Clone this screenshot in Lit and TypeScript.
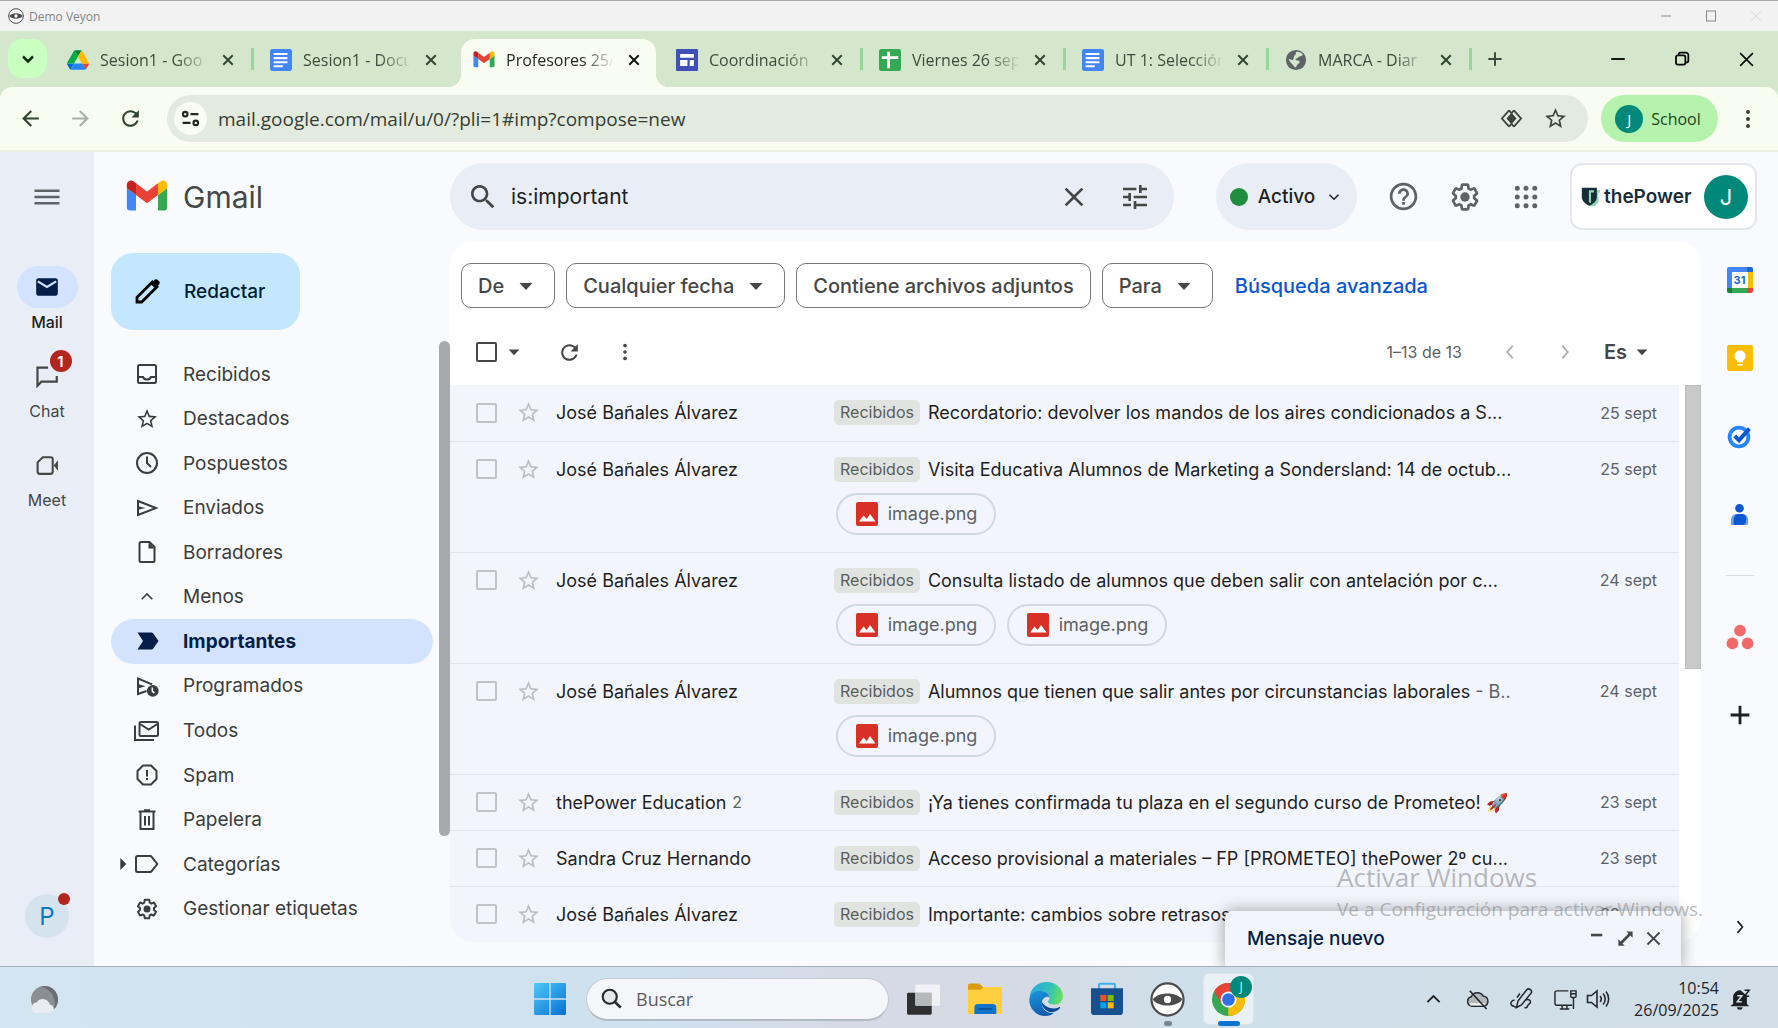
import { LitElement, html, css, svg, nothing } from "lit";
import { customElement, property } from "lit/decorators.js";
import { classMap } from "lit/directives/class-map.js";

const P = {
  menu: svg`<path d="M2 18h20v-2H2v2zm0-5h20v-2H2v2zm0-7v2h20V6H2z"/>`,
  search: svg`<path d="M15.5 14h-.79l-.28-.27C15.41 12.59 16 11.11 16 9.5 16 5.91 13.09 3 9.5 3S3 5.91 3 9.5 5.91 16 9.5 16c1.61 0 3.09-.59 4.23-1.57l.27.28v.79l5 4.99L20.49 19l-4.99-5zm-6 0C7.01 14 5 11.99 5 9.5S7.01 5 9.5 5 14 7.01 14 9.5 11.99 14 9.5 14z"/>`,
  close: svg`<path d="M19 6.41L17.59 5 12 10.59 6.41 5 5 6.41 10.59 12 5 17.59 6.41 19 12 13.41 17.59 19 19 17.59 13.41 12z"/>`,
  tune: svg`<path d="M3 17v2h6v-2H3zM3 5v2h10V5H3zm10 16v-2h8v-2h-8v-2h-2v6h2zM7 9v2H3v2h4v2h2V9H7zm14 4v-2H11v2h10zm-6-4h2V7h4V5h-4V3h-2v6z"/>`,
  help: svg`<path d="M11 18h2v-2h-2v2zm1-16C6.48 2 2 6.48 2 12s4.48 10 10 10 10-4.48 10-10S17.52 2 12 2zm0 18c-4.41 0-8-3.59-8-8s3.59-8 8-8 8 3.59 8 8-3.59 8-8 8zm0-14c-2.21 0-4 1.79-4 4h2c0-1.1.9-2 2-2s2 .9 2 2c0 2-3 1.75-3 5h2c0-2.25 3-2.5 3-5 0-2.21-1.79-4-4-4z"/>`,
  gear: svg`<path d="M13.85 22.25h-3.7c-.74 0-1.36-.54-1.45-1.27l-.27-1.89c-.27-.14-.53-.29-.79-.46l-1.8.72c-.7.26-1.47-.03-1.81-.65L2.2 15.53c-.35-.66-.2-1.44.36-1.88l1.53-1.19c-.01-.15-.02-.3-.02-.46 0-.15.01-.31.02-.46l-1.52-1.19c-.59-.45-.74-1.26-.37-1.88l1.85-3.19c.34-.62 1.11-.9 1.79-.63l1.81.73c.26-.17.52-.32.78-.46l.27-1.91c.09-.7.71-1.25 1.44-1.25h3.7c.74 0 1.36.54 1.45 1.27l.27 1.89c.27.14.53.29.79.46l1.8-.72c.71-.26 1.48.03 1.82.65l1.84 3.18c.36.66.2 1.44-.36 1.88l-1.52 1.19c.01.15.02.3.02.46s-.01.31-.02.46l1.52 1.19c.56.45.72 1.23.37 1.86l-1.86 3.22c-.34.62-1.11.9-1.8.63l-1.8-.72c-.26.17-.52.32-.78.46l-.27 1.91c-.1.68-.72 1.22-1.46 1.22zm-3.23-2h2.76l.37-2.55.53-.22c.44-.18.88-.44 1.34-.78l.45-.34 2.38.96 1.38-2.4-2.03-1.58.07-.56c.03-.26.06-.51.06-.78s-.03-.53-.06-.78l-.07-.56 2.03-1.58-1.39-2.4-2.39.96-.45-.35c-.42-.32-.87-.58-1.33-.77l-.52-.22-.37-2.55h-2.76l-.37 2.55-.53.21c-.44.19-.88.44-1.34.79l-.45.33-2.38-.95-1.39 2.39 2.03 1.58-.07.56a7 7 0 0 0-.06.79c0 .26.02.53.06.78l.07.56-2.03 1.58 1.38 2.4 2.39-.96.45.35c.43.33.86.58 1.33.77l.53.22.38 2.55z"/><circle cx="12" cy="12" r="3.5"/>`,
  apps: svg`${[5, 12, 19].map((y) => [5, 12, 19].map((x) => svg`<circle cx=${x} cy=${y} r="2"/>`))}`,
  star: svg`<path d="M22 9.24l-7.19-.62L12 2 9.19 8.63 2 9.24l5.46 4.73L5.82 21 12 17.27 18.18 21l-1.63-7.03L22 9.24zM12 15.4l-3.76 2.27 1-4.28-3.32-2.88 4.38-.38L12 6.1l1.71 4.04 4.38.38-3.32 2.88 1 4.28L12 15.4z"/>`,
  refresh: svg`<path d="M17.65 6.35C16.2 4.9 14.21 4 12 4c-4.42 0-7.99 3.58-7.99 8s3.57 8 7.99 8c3.73 0 6.84-2.55 7.73-6h-2.08c-.82 2.33-3.04 4-5.65 4-3.31 0-6-2.69-6-6s2.69-6 6-6c1.66 0 3.14.69 4.22 1.78L13 11h7V4l-2.35 2.35z"/>`,
  back: svg`<path d="M20 11H7.83l5.59-5.59L12 4l-8 8 8 8 1.41-1.41L7.83 13H20v-2z"/>`,
  forward: svg`<path d="M12 4l-1.41 1.41L16.17 11H4v2h12.17l-5.58 5.59L12 20l8-8z"/>`,
  dots: svg`<circle cx="12" cy="5" r="2"/><circle cx="12" cy="12" r="2"/><circle cx="12" cy="19" r="2"/>`,
  caret: svg`<path d="M5.500 9h13l-6.500 7z"/>`,
  chevDown: svg`<path d="M6 9l6 6 6-6" fill="none" stroke="currentColor" stroke-width="2"/>`,
  chevDownBold: svg`<path d="M6 9l6 6 6-6" fill="none" stroke="currentColor" stroke-width="3"/>`,
  chevUp: svg`<path d="M5 15l7-7 7 7" fill="none" stroke="currentColor" stroke-width="2.2"/>`,
  chevLeft: svg`<path d="M15 5l-6 7 6 7" fill="none" stroke="currentColor" stroke-width="2"/>`,
  chevRight: svg`<path d="M9 5l6 7-6 7" fill="none" stroke="currentColor" stroke-width="2"/>`,
  plus: svg`<path d="M12 4v16M4 12h16" fill="none" stroke="currentColor" stroke-width="2.4"/>`,
  site: svg`<g fill="none" stroke="currentColor" stroke-width="2.4"><circle cx="6" cy="7" r="2.6"/><path d="M12 7h9M3 17h9"/><circle cx="18" cy="17" r="2.6"/></g>`,
  diamonds: svg`<g fill="none" stroke="currentColor" stroke-width="1.9"><path d="M9.5 3.500L2 12l7.500 8.500M14.500 3.500L22 12l-7.500 8.500M9.500 3.500l2.500 3M14.500 3.500L12 6.500M9.500 20.500l2.500-3M14.500 20.500L12 17.500"/><path d="M12 7.500L8 12l4 4.500 4-4.500z" fill="currentColor"/></g>`,
  mail: svg`<path d="M20 4H4c-1.100 0-2 .9-2 2v12c0 1.100.9 2 2 2h16c1.100 0 2-.9 2-2V6c0-1.100-.9-2-2-2z"/><path d="M3.500 6.800L12 12l8.500-5.200" fill="none" stroke="#d3e3fd" stroke-width="2"/>`,
  chat: svg`<path d="M13 4.200H3.200V21l3.600-3.800H21V12" fill="none" stroke="currentColor" stroke-width="2"/>`,
  meet: svg`<path d="M7.500 4H15a2 2 0 0 1 2 2v12a2 2 0 0 1-2 2H4.500a2 2 0 0 1-2-2V9z" fill="none" stroke="currentColor" stroke-width="2"/><path d="M18 12l4-5v10z"/>`,
  pencil: svg`<path d="M3.300 20.700v-3.900L16 4.100l3.900 3.900L7.200 20.700z" fill="none" stroke="currentColor" stroke-width="2.300"/><path d="M14.500 5.600L17.300 2.800a2.400 2.400 0 0 1 3.500 0l.4.4a2.400 2.400 0 0 1 0 3.500l-2.800 2.800z"/>`,
  inbox: svg`<path d="M3 4.500a1.500 1.500 0 0 1 1.500-1.500h15a1.500 1.500 0 0 1 1.500 1.500v15a1.500 1.500 0 0 1-1.500 1.500h-15a1.500 1.500 0 0 1-1.500-1.500z" fill="none" stroke="currentColor" stroke-width="2"/><path d="M3 15h5c.8 1.700 2.200 2.600 4 2.600s3.200-.9 4-2.600h5" fill="none" stroke="currentColor" stroke-width="2"/>`,
  clock: svg`<circle cx="12" cy="12" r="10" fill="none" stroke="currentColor" stroke-width="2"/><path d="M12 5.500V12l4 4" fill="none" stroke="currentColor" stroke-width="2"/>`,
  send: svg`<path d="M3 5l18 7-18 7z" fill="none" stroke="currentColor" stroke-width="2"/><path d="M3 10.200l7.500 1.800-7.500 1.800z"/>`,
  file: svg`<path d="M14.500 2H6a1.500 1.500 0 0 0-1.500 1.500v17A1.500 1.500 0 0 0 6 22h12a1.500 1.500 0 0 0 1.500-1.500V7z" fill="none" stroke="currentColor" stroke-width="2"/><path d="M13.500 2V8.500h6z"/>`,
  important: svg`<path d="M2.500 3.500h14a2 2 0 0 1 1.600.8L23.500 12l-5.400 7.700a2 2 0 0 1-1.600.8h-14L8 12z"/>`,
  scheduled: svg`<path d="M11.500 17L3 20V4.500L17 10.300" fill="none" stroke="currentColor" stroke-width="2"/><path d="M3 10l7.500 2.200L3 14.400z"/><circle cx="17.800" cy="16.800" r="5.900"/><path d="M17.300 13.500v3.600l2 2" fill="none" stroke="#f8fafd" stroke-width="1.500"/>`,
  all: svg`<g fill="none" stroke="currentColor" stroke-width="2"><rect x="4.500" y="3" width="18.500" height="14" rx="1.500"/><path d="M5 5l8.700 5.500L22.500 5"/><path d="M0 6.500V21h19"/></g>`,
  spam: svg`<path d="M8 2.500h8L21.500 8v8L16 21.500H8L2.500 16V8z" fill="none" stroke="currentColor" stroke-width="2"/><path d="M11 7h2v6.500h-2zM11 15h2v2h-2z"/>`,
  trash: svg`<path d="M5.500 4.500v16.500h13V4.500M3.500 3.500h17M9 2.200h6M10 8v9.500M14 8v9.500" fill="none" stroke="currentColor" stroke-width="2"/>`,
  label: svg`<path d="M2.500 4h12.500a2 2 0 0 1 1.700.9L22.300 12l-5.600 7.100a2 2 0 0 1-1.700.9H2.500A1.500 1.500 0 0 1 1 18.500v-13A1.500 1.500 0 0 1 2.500 4z" fill="none" stroke="currentColor" stroke-width="2"/>`,
  picture: svg`<rect x="1" y="0" width="22" height="24" rx="2" fill="#d93025"/><path d="M4 19.500l4.500-6 3.200 3.500 3.300-5 5.500 7.500z" fill="#fff"/>`,
  expand: svg`<path d="M13 3h8v8l-2.800-2.800L8.200 18.200 11 21H3v-8l2.800 2.800L15.800 5.800z"/>`,
  minus: svg`<path d="M4 5h15v3.500H4z"/>`,
  winMin: svg`<path d="M3 12h18" stroke="currentColor" stroke-width="2.400" fill="none"/>`,
  winRestore: svg`<g fill="none" stroke="currentColor" stroke-width="2.600"><rect x="3" y="6.500" width="14" height="14" rx="2.500"/><path d="M7 6V5a2.500 2.500 0 0 1 2.500-2.500H18a3.500 3.500 0 0 1 3.500 3.500v8.500a2.500 2.500 0 0 1-2.500 2.500h-1"/></g>`,
  winClose: svg`<path d="M3 3l18 18M21 3L3 21" stroke="currentColor" stroke-width="2.200" fill="none"/>`,
  tabClose: svg`<path d="M2.500 2.500l19 19M21.500 2.500l-19 19" stroke="currentColor" stroke-width="3.800" fill="none"/>`,
  thinMin: svg`<path d="M2 12h20" stroke="currentColor" stroke-width="2" fill="none"/>`,
  thinMax: svg`<rect x="3" y="2" width="18" height="20" stroke="currentColor" stroke-width="2" fill="none"/>`,
  thinClose: svg`<path d="M2 2l20 20M22 2L2 22" stroke="currentColor" stroke-width="1.600" fill="none"/>`,
  arrowRight: svg`<path d="M8 3l9 9-9 9z"/>`,
  gmail: svg`<g transform="translate(-13.100 -8.450) scale(.2614)"><path fill="#4285f4" d="M58 108h14V74L52 59v43c0 3.320 2.690 6 6 6"/><path fill="#34a853" d="M120 108h14c3.320 0 6-2.690 6-6V59l-20 15"/><path fill="#fbbc04" d="M120 48v26l20-15v-8c0-7.420-8.470-11.650-14.400-7.200"/><path fill="#ea4335" d="M72 74V48l24 18 24-18v26L96 92"/><path fill="#c5221f" d="M52 51v8l20 15V48l-5.600-4.200c-5.940-4.450-14.400-.22-14.400 7.200"/></g>`,
  drive: svg`<g transform="translate(0 1.300) scale(.275)"><path fill="#0066da" d="m6.600 66.850 3.850 6.650c.8 1.400 1.950 2.500 3.300 3.300l13.750-23.800h-27.500c0 1.550.4 3.100 1.200 4.500z"/><path fill="#00ac47" d="m43.650 25-13.750-23.800c-1.350.8-2.500 1.900-3.300 3.300l-25.400 44a9.060 9.060 0 0 0 -1.200 4.500h27.500z"/><path fill="#ea4335" d="m73.550 76.800c1.350-.8 2.500-1.900 3.300-3.300l1.600-2.750 7.650-13.250c.8-1.400 1.200-2.950 1.200-4.500h-27.502l5.852 11.500z"/><path fill="#00832d" d="m43.650 25 13.750-23.800c-1.350-.8-2.900-1.200-4.500-1.200h-18.500c-1.600 0-3.150.45-4.500 1.200z"/><path fill="#2684fc" d="m59.800 53h-32.300l-13.750 23.800c1.350.8 2.900 1.200 4.500 1.200h50.800c1.600 0 3.150-.45 4.500-1.200z"/><path fill="#ffba00" d="m73.400 26.500-12.700-22c-.8-1.400-1.950-2.500-3.300-3.300l-13.750 23.800 16.150 28h27.450c0-1.550-.4-3.100-1.200-4.500z"/></g>`,
  docs: svg`<rect width="24" height="24" rx="2.500" fill="#4285f4"/><path d="M4 5.500h15M4 10h15M4 14.500h15M4 18.800h10" stroke="#fff" stroke-width="2.300"/>`,
  sites: svg`<rect width="24" height="24" rx="1" fill="#3f51b5"/><path d="M4.500 5.500h15v4h-15zM4.500 12h8v6.500h-8zM15 12h4.500v6.500H15z" fill="#fff"/>`,
  sheets: svg`<rect width="24" height="24" rx="2.500" fill="#34a853"/><path d="M3 9.500h18M10.500 3v18" stroke="#fff" stroke-width="3"/>`,
  globe: svg`<circle cx="12" cy="12" r="11" fill="#5f6368"/><path d="M13 3c3 0 5 1 6.500 3-1.500 2.500-4 1.500-5 3-1 1.700-3 1-3 2.500s4 .5 4.500 2.500c.4 1.800-3 2.500-3.500 5-.3 1.500-2 1-3-.5C8.500 16.500 5 15 4 11c2 0 4 2 5 .5S9 8 11 6.500 10.500 3.500 13 3z" fill="#d4e6cc"/>`,
  eye: svg`<circle cx="12" cy="12" r="11" fill="#fff" stroke="#4b4b4d" stroke-width="1.500"/><path d="M1.800 12C6 6.500 18 6.500 22.200 12 18 17.500 6 17.500 1.800 12z" fill="#4b4b4d"/><circle cx="12" cy="12" r="2.500" fill="#fff"/>`,
  keep: svg`<rect width="24" height="24" rx="2" fill="#fbbc04"/><path d="M12 5a5 5 0 0 0-2.800 9.200V16h5.600v-1.800A5 5 0 0 0 12 5zM9.500 17.500h5V19h-5z" fill="#fff"/>`,
  tasks: svg`<circle cx="11.500" cy="12.500" r="9" fill="none" stroke="#2684fc" stroke-width="3.600"/><path d="M7.500 11.500l4 4.200L21.500 4.500" fill="none" stroke="#0b57d0" stroke-width="3.800"/>`,
  contacts: svg`<circle cx="12" cy="5.500" r="4.500" fill="#0b57d0"/><path d="M3 23v-4.500C3 14 5.500 11.500 9 11.500h6c3.500 0 6 2.500 6 6V21a2 2 0 0 1-2 2z" fill="#669df6"/><path d="M6 23v-5c0-4 1.800-6.500 5-6.500h3.500c3 0 4.500 2.500 4.500 6 0 3-1.500 5.500-4 5.500z" fill="#0b57d0"/>`,
  asana: svg`<g fill="#f06a6a"><circle cx="12" cy="6.500" r="5"/><circle cx="5.500" cy="17.500" r="5"/><circle cx="18.500" cy="17.500" r="5"/></g>`,
  shield: svg`<path d="M11 4h12v2.500h-2V18l-4.500 5H11z" fill="#8fd8b0"/><path d="M1 1h18v11c0 4.500-3.500 8-9 10.500C4.500 20 1 16.500 1 12z" fill="#172d3a"/><path d="M9.500 4h6v2.500h-3.500v13l-2.500-1.500z" fill="#8fd8b0"/>`,
  windows: svg`<defs><linearGradient id="w" x1="0" y1="0" x2="1" y2="1" gradientUnits="objectBoundingBox"><stop offset="0" stop-color="#4cc9fa"/><stop offset="1" stop-color="#0a6fd0"/></linearGradient></defs><path fill="url(#w)" d="M1 0h10.500v11.500H0V1a1 1 0 0 1 1-1zM12.500 0H23a1 1 0 0 1 1 1v10.500H12.500zM0 12.500h11.500V24H1a1 1 0 0 1-1-1zM12.500 12.500H24V23a1 1 0 0 1-1 1H12.500z"/>`,
  taskview: svg`<rect x="0" y="7" width="18" height="16" rx="1" fill="#2f2f30"/><rect x="6" y="1" width="18" height="15.500" rx="1" fill="#f6f6f8" fill-opacity=".82"/><rect x="6" y="7" width="12" height="9.500" fill="#b7b8ba"/>`,
  folder: svg`<path d="M0 2.500A1.500 1.500 0 0 1 1.500 1H8l2.500 2.500H22A1.500 1.500 0 0 1 23.500 5v4H0z" fill="#d99c0f"/><path d="M0 5.500h9L11 3.500h11A1.500 1.500 0 0 1 24 5v17.500H0z" fill="#fdcf3f"/><path d="M4.500 22.500V18A2.500 2.500 0 0 1 7 15.500h10.500A2.500 2.500 0 0 1 20 18v4.500z" fill="#1273cf"/><path d="M7.500 19h9.500" stroke="#0a4f96" stroke-width="1.200"/>`,
  edge: svg`<defs><linearGradient id="e1" x1="0" y1=".3" x2="1" y2=".5"><stop offset="0" stop-color="#2aa8dc"/><stop offset=".6" stop-color="#33c5b5"/><stop offset="1" stop-color="#6be05a"/></linearGradient><linearGradient id="e2" x1="0" y1="0" x2=".4" y2="1"><stop offset="0" stop-color="#1d9ade"/><stop offset="1" stop-color="#0b5bb0"/></linearGradient></defs><path d="M.5 10.500C1 4.500 6 0 12.200 0 19 0 24 4.500 24 10c0 3.800-2.800 6-6.200 6-2.500 0-4.300-.8-4.300-2 0-.8 1-1.200 1-3 0-2.500-2.300-4.500-5.500-4.500-4 0-7 1.500-8.500 4z" fill="url(#e1)"/><path d="M.2 12.500C.4 8.500 4 6 8 6.200c4 .2 6.500 2.300 6.500 5-1-1.800-5.500-.5-5.500 3.800 0 4.500 4.500 8 9 6.500-2 1.700-4 2.500-6.500 2.500C5 24 .1 18.500.2 12.500z" fill="url(#e2)"/><path d="M9 14c-.3 4.500 4 8 8 7.200 2-.4 3.500-1.200 4.800-2.700.5-.6 0-1.100-.6-.7-4 2-9.200.8-12.200-3.800z" fill="#0c4a94"/>`,
  store: svg`<path d="M6 5V1.500a1 1 0 0 1 1-1h10a1 1 0 0 1 1 1V5" fill="none" stroke="#35b3ee" stroke-width="1.500"/><path d="M0 4h24v17.500a2.500 2.500 0 0 1-2.500 2.500h-19A2.500 2.500 0 0 1 0 21.500z" fill="#17508f"/><path d="M7 9h4.500v4.500H7z" fill="#f25022"/><path d="M12.500 9H17v4.500h-4.500z" fill="#7fba00"/><path d="M7 14.500h4.500V19H7z" fill="#00a4ef"/><path d="M12.500 14.500H17V19h-4.500z" fill="#ffb900"/>`,
  chrome: svg`<circle cx="12" cy="12" r="12" fill="#34a853"/><path d="M12 12L1.600 6A12 12 0 0 1 22.400 6z" fill="#ea4335"/><path d="M12 12l10.400-6A12 12 0 0 1 12 24z" fill="#fbbc04"/><path d="M1.600 6l5.200 9L12 6.500z" fill="#ea4335"/><path d="M12 24l5.200-9L12 12z" fill="#fbbc04"/><circle cx="12" cy="12" r="5.800" fill="#fff"/><circle cx="12" cy="12" r="4.600" fill="#2f6fe8"/>`,
  weather: svg`<circle cx="12" cy="12" r="10.500" fill="#8b8f94"/><path d="M12 1.500a10.500 10.500 0 0 1 7 18.300C22 13 18 4 9 2z" fill="#6a6e73"/><path d="M6.500 22.500a4.200 4.200 0 0 1-.4-8.400 5.600 5.600 0 0 1 10 1.700 3.400 3.400 0 0 1 .4 6.700z" fill="#e9edf1"/>`,
  cloudOff: svg`<path d="M6 19a5 5 0 0 1-.5-9.800A7 7 0 0 1 18 8.500a5.300 5.300 0 0 1 .5 10.500z" fill="#b4b8bb" stroke="#24292c" stroke-width="1.500"/><path d="M4.500 17h15" stroke="#eceff1" stroke-width="2.500"/><path d="M4 3l17.500 19" stroke="#24292c" stroke-width="1.600"/>`,
  pen: svg`<g fill="none" stroke="#24292c" stroke-width="1.500"><path d="M9 14L17.500 3a2.800 2.800 0 0 1 4.300 3.600L12.500 18 7.500 20.500z"/><path d="M5.500 13c-3 .5-4.500 3-3 5 1.200 1.600 3.500 1 4.500 2.500M16 13c3-1 5.500-.5 5.500 2 0 2-2.500 2-3 4s-1.500 2-3 1.500M11 6.500l-3 4"/></g>`,
  monitor: svg`<g fill="none" stroke="#24292c" stroke-width="1.500"><path d="M15 3H3a2 2 0 0 0-2 2v11a2 2 0 0 0 2 2h16M6 22h10M8.500 18v4M13.500 18v4"/><path d="M17.500 3H23v5.500a1.500 1.500 0 0 1-1.500 1.500H19a1.500 1.500 0 0 1-1.500-1.500zM20.300 10v12M17.500 6H23"/></g>`,
  speaker: svg`<g fill="none" stroke="#24292c" stroke-width="1.600"><path d="M1.500 8.500h4L11 4v16l-5.500-4.500h-4z"/><path d="M14 9a4.500 4.500 0 0 1 0 6M17 6.500a8 8 0 0 1 0 11M20 4.500a12 12 0 0 1 0 15"/></g>`,
  bell: svg`<path d="M4.500 17.500V10a7.500 7.500 0 0 1 8-7.500l7 6v9l2 1.500v1H2v-1zM8.500 21h6.500a3.300 3.300 0 0 1-6.500 0z" fill="#1b1f22"/><path d="M9 8.500h5L9 15h5" fill="none" stroke="#d0dee7" stroke-width="1.600"/><path d="M17 2.500h5L17 9h5" fill="none" stroke="#1b1f22" stroke-width="1.600"/>`,
  magnifier: svg`<circle cx="10" cy="10" r="8" fill="#e6e7ea" stroke="#26282b" stroke-width="2.400"/><path d="M16 16l6.500 6.500" stroke="#26282b" stroke-width="3"/>`,
};
type IconName = keyof typeof P;

@customElement("ui-icon")
class UiIcon extends LitElement {
  @property() name: IconName = "menu";
  @property({ type: Number }) size = 24;
  static styles = css`
    :host { display: inline-flex; flex: none; }
    svg { display: block; fill: currentColor; overflow: visible; }
  `;
  render() {
    return html`<svg width=${this.size} height=${this.size} viewBox="0 0 24 24" aria-hidden="true">${P[this.name]}</svg>`;
  }
}

const icon = (name: IconName, size = 24) => html`<ui-icon name=${name} size=${size}></ui-icon>`;

const TABS: { icon: IconName; title: string; active?: boolean; sep?: boolean }[] = [
  { icon: "drive", title: "Sesion1 - Goo", sep: true },
  { icon: "docs", title: "Sesion1 - Docu" },
  { icon: "gmail", title: "Profesores 25/", active: true },
  { icon: "sites", title: "Coordinación", sep: true },
  { icon: "sheets", title: "Viernes 26 sep", sep: true },
  { icon: "docs", title: "UT 1: Selección", sep: true },
  { icon: "globe", title: "MARCA - Diar", sep: true },
];

const FOLDERS: { icon: IconName; name: string; active?: boolean; nested?: boolean; size?: number }[] = [
  { icon: "inbox", name: "Recibidos" },
  { icon: "star", name: "Destacados" },
  { icon: "clock", name: "Pospuestos" },
  { icon: "send", name: "Enviados" },
  { icon: "file", name: "Borradores" },
  { icon: "chevUp", name: "Menos", size: 18 },
  { icon: "important", name: "Importantes", active: true },
  { icon: "scheduled", name: "Programados" },
  { icon: "all", name: "Todos" },
  { icon: "spam", name: "Spam" },
  { icon: "trash", name: "Papelera" },
  { icon: "label", name: "Categorías", nested: true },
  { icon: "gear", name: "Gestionar etiquetas" },
];

const MAILS: { from: string; count?: number; subject: string; snippet?: string; files?: number; date: string }[] = [
  { from: "José Bañales Álvarez", subject: "Recordatorio: devolver los mandos de los aires condicionados a S...", date: "25 sept" },
  { from: "José Bañales Álvarez", subject: "Visita Educativa Alumnos de Marketing a Sondersland: 14 de octub...", files: 1, date: "25 sept" },
  { from: "José Bañales Álvarez", subject: "Consulta listado de alumnos que deben salir con antelación por c...", files: 2, date: "24 sept" },
  { from: "José Bañales Álvarez", subject: "Alumnos que tienen que salir antes por circunstancias laborales", snippet: " - B..", files: 1, date: "24 sept" },
  { from: "thePower Education", count: 2, subject: "¡Ya tienes confirmada tu plaza en el segundo curso de Prometeo! 🚀", date: "23 sept" },
  { from: "Sandra Cruz Hernando", subject: "Acceso provisional a materiales – FP [PROMETEO] thePower 2º cu...", date: "23 sept" },
  { from: "José Bañales Álvarez", subject: "Importante: cambios sobre retrasos", date: "22 sept" },
];

const reset = css`
  *, *::before, *::after { box-sizing: border-box; }
  button { font: inherit; color: inherit; background: none; border: 0; padding: 0; margin: 0; display: inline-flex; align-items: center; justify-content: center; flex: none; }
  a { color: inherit; text-decoration: none; }
  input { font: inherit; color: inherit; margin: 0; }
`;

@customElement("browser-chrome")
class BrowserChrome extends LitElement {
  static styles = [reset, css`
    :host { display: block; font-family: "Open Sans", "Noto Sans", sans-serif; background: #d4e6cc; }
    .title { display: flex; align-items: center; height: 31px; padding: 0 0 0 8px; background: #f2f2f2; border-top: 1px solid #adadad; font-size: 12px; color: #858585; gap: 5px; }
    .title .grow { flex: 1; }
    .title .ctl { display: flex; }
    .title button { width: 45px; height: 28px; }
    .title button:last-child { color: #d2d2d2; }
    .strip { display: flex; align-items: center; height: 56px; padding: 8px 0 0 8px; color: #3c4b3c; }
    .drop { width: 39px; height: 39px; border-radius: 14px; background: #c9ffc0; margin: 0 4px 9px 0; color: #0c2a0c; }
    .tab { position: relative; isolation: isolate; display: flex; align-items: center; flex: 0 1 203px; min-width: 0; height: 48px; padding: 0 14px 7px 16px; gap: 10px; font-size: 16px; }
    .tab .name { flex: 1; min-width: 0; justify-content: flex-start; overflow: hidden; white-space: nowrap; padding-left: 1px; mask-image: linear-gradient(90deg, #000 72%, rgba(0, 0, 0, .1)); }
    .tab .shut { width: 24px; height: 24px; color: #2f442f; }
    .tab.sep { background: linear-gradient(#96d696, #96d696) 100% 9px / 3px 22px no-repeat; }
    .tab.active { color: #1e281e; }
    .tab.active .shut { color: #0c140c; }
    .tab.active::before { content: ""; position: absolute; z-index: -1; inset: 0 4px; border-radius: 14px 14px 0 0; background: #f8fcf1; }
    .tab.active::after { content: ""; position: absolute; z-index: -1; inset: auto -9px 0; height: 13px; background: radial-gradient(circle at 0 0, transparent 13px, #f8fcf1 13px) 0 0 / 13px 13px no-repeat, radial-gradient(circle at 100% 0, transparent 13px, #f8fcf1 13px) 100% 0 / 13px 13px no-repeat; }
    .add { width: 46px; height: 40px; margin-bottom: 8px; }
    .strip .grow { flex: 1; }
    .win { width: 64px; height: 40px; margin-bottom: 8px; color: #000; }
    .bar { display: flex; align-items: center; height: 65px; padding: 0 14px 0 5px; background: #f8fcf1; border-bottom: 2px solid #ebf0e3; border-radius: 12px 12px 0 0; color: #2f442f; }
    .nav { width: 50px; height: 40px; }
    .nav[disabled] { color: #a7b2a4; }
    .omni { display: flex; align-items: center; flex: 1; height: 47px; margin: 0 13px 0 12px; padding: 0 11px 0 7px; border-radius: 24px; background: #e3ebdf; }
    .site { width: 33px; height: 33px; border-radius: 50%; background: #f8fcf1; color: #1e281e; }
    .omni input { flex: 1; min-width: 0; border: 0; background: none; padding: 0 11px; font-size: 19px; color: #363d35; }
    .omni .act { width: 44px; height: 40px; color: #3b463a; }
    .profile { height: 47px; width: 117px; gap: 8px; padding-right: 3px; border-radius: 24px; background: #b4f2ae; font-size: 16px; color: #1e4420; }
    .disc { display: inline-flex; align-items: center; justify-content: center; width: 28px; height: 28px; border-radius: 50%; background: #00897b; color: #fff; font-size: 15px; }
    .more { width: 32px; margin-left: 14px; height: 40px; }
  `];
  render() {
    return html`
      <div class="title">
        ${icon("eye", 16)}<span>Demo Veyon</span><span class="grow"></span>
        <div class="ctl">
          <button aria-label="Minimizar">${icon("thinMin", 12)}</button>
          <button aria-label="Maximizar">${icon("thinMax", 12)}</button>
          <button aria-label="Cerrar">${icon("thinClose", 12)}</button>
        </div>
      </div>
      <div class="strip">
        <button class="drop" aria-label="Buscar pestañas">${icon("chevDownBold", 20)}</button>
        ${TABS.map((t) => html`
          <div class=${classMap({ tab: true, active: !!t.active, sep: !!t.sep })}>
            ${icon(t.icon, 22)}
            <button class="name">${t.title}</button>
            <button class="shut" aria-label="Cerrar pestaña">${icon("tabClose", 12)}</button>
          </div>`)}
        <button class="add" aria-label="Nueva pestaña">${icon("plus", 20)}</button>
        <span class="grow"></span>
        <button class="win" aria-label="Minimizar">${icon("winMin", 18)}</button>
        <button class="win" aria-label="Restaurar">${icon("winRestore", 16)}</button>
        <button class="win" aria-label="Cerrar">${icon("winClose", 17)}</button>
      </div>
      <div class="bar">
        <button class="nav" aria-label="Atrás">${icon("back", 25)}</button>
        <button class="nav" aria-label="Adelante" disabled>${icon("forward", 25)}</button>
        <button class="nav" aria-label="Volver a cargar">${icon("refresh", 25)}</button>
        <div class="omni">
          <button class="site" aria-label="Información del sitio">${icon("site", 21)}</button>
          <input aria-label="Dirección" value="mail.google.com/mail/u/0/?pli=1#imp?compose=new">
          <button class="act" aria-label="Lente">${icon("diamonds", 23)}</button>
          <button class="act" aria-label="Marcador">${icon("star", 25)}</button>
        </div>
        <button class="profile"><span class="disc">J</span>School</button>
        <button class="more" aria-label="Menú">${icon("dots", 24)}</button>
      </div>`;
  }
}

@customElement("mail-list")
class MailList extends LitElement {
  static styles = [reset, css`
    :host { display: flex; flex-direction: column; flex: 1; min-width: 0; min-height: 0; overflow: hidden; background: #fff; border-radius: 24px; }
    .filters { display: flex; align-items: center; flex: none; gap: 11px; padding: 22px 11px 0; font-size: 20px; font-weight: 500; color: #444746; }
    .chip { height: 45px; padding: 0 16px; gap: 10px; border: 1px solid #747775; border-radius: 10px; white-space: nowrap; }
    .adv { margin-left: 11px; color: #0b57d0; white-space: nowrap; }
    .tools { display: flex; align-items: center; flex: none; height: 50px; margin: 19px 0 8px; padding: 0 45px 0 26px; color: #444746; font-size: 16px; }
    .box { appearance: none; display: block; width: 21px; height: 20px; border: 2px solid #444746; border-radius: 2px; background: transparent; flex: none; }
    .tools .pick { width: 34px; height: 40px; }
    .tools .btn { width: 55px; height: 40px; }
    .tools .first { margin-left: 11px; }
    .tools .grow { flex: 1; }
    .range { color: #5e6164; margin-right: 20px; white-space: nowrap; }
    .tools .page { color: #a9acae; }
    .lang { gap: 5px; width: 56px; margin-left: 8px; font-weight: 600; font-size: 20px; }
    .scroll { display: flex; flex: 1; min-height: 0; overflow: hidden; align-items: flex-start; }
    table { flex: 1; min-width: 0; border-collapse: collapse; table-layout: fixed; width: 100%; background: #f2f5fc; font-size: 18px; color: #1f1f1f; }
    td { padding: 0; height: 56px; vertical-align: top; border-bottom: 1px solid #e0e5ec; white-space: nowrap; overflow: hidden; }
    .c-box { width: 62px; padding-left: 26px; }
    .c-star { width: 32px; text-align: center; }
    .c-from { width: 290px; padding-left: 12px; }
    .c-date { width: 151px; padding-right: 22px; text-align: right; }
    .line { display: flex; align-items: center; height: 55px; }
    .c-box .box { border-color: #c0c3c7; }
    .c-star .line { justify-content: center; color: #bbbec2; }
    .count { font-size: 16px; color: #5e6164; margin-left: 6px; }
    .c-date .line { justify-content: flex-end; font-size: 16px; color: #5e6164; }
    .tag { padding: 0 6px; margin-right: 8px; height: 25px; line-height: 25px; border-radius: 5px; background: #e1e3e1; color: #5a5d5c; font-size: 16px; }
    .snip { color: #5e6164; white-space: pre; }
    .files { display: flex; gap: 11px; padding: 0 0 17px 2px; margin-top: -4px; height: 59px; }
    .file { height: 42px; width: 160px; gap: 9px; border: 2px solid #d0d9e2; border-radius: 21px; color: #5e6164; font-size: 18px; }
    .track { width: 16px; margin-left: 6px; flex: none; align-self: stretch; }
    .thumb { height: 51%; background: #c9c9c9; border: 1px solid #bdbdbd; }
  `];
  render() {
    return html`
      <div class="filters">
        <button class="chip">De ${icon("caret", 24)}</button>
        <button class="chip">Cualquier fecha ${icon("caret", 24)}</button>
        <button class="chip">Contiene archivos adjuntos</button>
        <button class="chip">Para ${icon("caret", 24)}</button>
        <a class="adv" href="#avanzada">Búsqueda avanzada</a>
      </div>
      <div class="tools">
        <input class="box" type="checkbox" aria-label="Seleccionar todo">
        <button class="pick" aria-label="Seleccionar">${icon("caret", 20)}</button>
        <button class="btn first" aria-label="Actualizar">${icon("refresh", 25)}</button>
        <button class="btn" aria-label="Más">${icon("dots", 22)}</button>
        <span class="grow"></span>
        <span class="range">1–13 de 13</span>
        <button class="btn page" aria-label="Anterior">${icon("chevLeft", 22)}</button>
        <button class="btn page" aria-label="Siguiente">${icon("chevRight", 22)}</button>
        <button class="lang">Es ${icon("caret", 20)}</button>
      </div>
      <div class="scroll">
        <table>
          <tbody>
            ${MAILS.map((m) => html`
              <tr>
                <td class="c-box"><div class="line"><input class="box" type="checkbox" aria-label="Seleccionar mensaje"></div></td>
                <td class="c-star"><div class="line"><button aria-label="Destacar">${icon("star", 25)}</button></div></td>
                <td class="c-from"><div class="line">${m.from}${m.count ? html`<span class="count">${m.count}</span>` : nothing}</div></td>
                <td>
                  <div class="line"><span class="tag">Recibidos</span><span>${m.subject}</span>${m.snippet ? html`<span class="snip">${m.snippet}</span>` : nothing}</div>
                  ${m.files ? html`<div class="files">${Array.from({ length: m.files }, () => html`<button class="file">${icon("picture", 24)}image.png</button>`)}</div>` : nothing}
                </td>
                <td class="c-date"><div class="line">${m.date}</div></td>
              </tr>`)}
          </tbody>
        </table>
        <div class="track"><div class="thumb"></div></div>
      </div>`;
  }
}

@customElement("gmail-app")
class GmailApp extends LitElement {
  static styles = [reset, css`
    :host { position: relative; display: flex; min-height: 0; overflow: hidden; background: #f8fafd; font-family: Inter, Roboto, sans-serif; color: #444746; }
    .rail { display: flex; flex-direction: column; align-items: center; flex: none; width: 94px; background: #e9eef6; padding-bottom: 28px; font-size: 16px; }
    .burger { height: 89px; width: 60px; color: #5f6368; }
    .app { display: flex; flex-direction: column; align-items: center; position: relative; height: 89px; color: #444746; }
    .app.on { color: #1f1f1f; font-weight: 500; }
    .pill { display: flex; align-items: center; justify-content: center; width: 61px; height: 42px; border-radius: 21px; margin-bottom: 4px; }
    .app.on .pill { background: #d3e3fd; color: #041e49; }
    .apps { display: flex; flex-direction: column; gap: 0; padding-top: 25px; flex: 1; }
    .badge { position: absolute; left: 33px; top: -5px; width: 22px; height: 22px; border-radius: 50%; background: #b3261e; color: #fff; font-size: 15px; font-weight: 600; display: flex; align-items: center; justify-content: center; }
    .presence { position: relative; display: flex; align-items: center; justify-content: center; width: 44px; height: 44px; border-radius: 50%; background: #d5e3ee; color: #0b78c8; font-size: 24px; }
    .presence i { position: absolute; right: -1px; top: -1px; width: 12px; height: 12px; border-radius: 50%; background: #b3261e; }
    .page { display: flex; flex-direction: column; flex: 1; min-width: 0; }
    header { display: flex; align-items: center; flex: none; height: 89px; padding: 0 21px 0 0; }
    .logo { display: flex; align-items: center; gap: 15px; width: 356px; flex: none; padding-left: 32px; font-size: 30px; color: #444746; }
    .search { display: flex; align-items: center; flex: 0 1 724px; min-width: 0; height: 67px; padding: 0 9px 0 17px; border-radius: 34px; background: #e9eef6; }
    .search input { flex: 1; min-width: 0; border: 0; background: none; padding: 0 12px; font-size: 21px; color: #1f1f1f; }
    .search button { width: 61px; height: 50px; }
    .status { margin-left: auto; gap: 10px; width: 141px; height: 67px; border-radius: 34px; background: #e9eef6; font-size: 19px; font-weight: 500; color: #1f1f1f; }
    .status i { width: 18px; height: 18px; border-radius: 50%; background: #1e8e3e; }
    .hicons { display: flex; margin: 0 14px 0 16px; color: #5f6368; }
    .hicons button { width: 61px; height: 50px; }
    .account { width: 187px; height: 67px; gap: 3px; padding: 0 7px 0 9px; background: #fff; border: 2px solid #e4e7ee; border-radius: 12px; color: #172d3a; font-size: 19px; font-weight: 600; justify-content: flex-start; }
    .avatar { display: flex; align-items: center; justify-content: center; width: 44px; height: 44px; margin-left: auto; border-radius: 50%; background: #00897b; color: #fff; font-size: 22px; font-weight: 400; flex: none; }
    .body { display: flex; flex: 1; min-height: 0; padding-bottom: 24px; }
    .side { position: relative; display: flex; flex-direction: column; width: 356px; flex: none; padding: 12px 17px 11px 17px; font-size: 19px; }
    .compose { width: 189px; height: 77px; border-radius: 22px; background: #c2e7ff; color: #001d35; font-weight: 500; justify-content: flex-start; padding-left: 22px; gap: 22px; flex: none; margin-bottom: 22px; }
    .compose ui-icon { color: #000; }
    nav { display: flex; flex-direction: column; flex: 1; min-height: 0; }
    nav a { position: relative; display: flex; align-items: center; flex: 1; gap: 24px; padding-left: 24px; border-radius: 23px; color: #3a3d3c; }
    nav a.on { background: #d3e3fd; color: #041e49; font-weight: 700; }
    nav .slot { display: flex; align-items: center; justify-content: center; width: 24px; }
    nav .open { position: absolute; left: 4px; }
    .sbar { position: absolute; right: 0; top: 100px; width: 11px; height: 495px; border-radius: 6px; background: #a8a9ac; }
    .addons { display: flex; flex-direction: column; align-items: center; flex: none; width: 77px; color: #1f1f1f; }
    .addons button { width: 50px; height: 78px; }
    .addons hr { width: 28px; height: 1px; border: 0; background: #d8dbe0; margin: 22px 0; flex: none; }
    .addons .fold { margin-top: auto; margin-bottom: -24px; }
    .cal { position: relative; width: 26px; height: 26px; display: flex; align-items: center; justify-content: center; background: linear-gradient(90deg, #4285f4 20px, #1967d2 20px) 0 0 / 100% 5px no-repeat, linear-gradient(#fff, #fff) 5px 5px / 16px 16px no-repeat, linear-gradient(90deg, #188038 5px, #34a853 5px, #34a853 20px, #ea4335 20px) 0 100% / 100% 5px no-repeat, linear-gradient(90deg, #4285f4 20px, #fbbc04 20px); border-radius: 2px; color: #1967d2; font-size: 11px; font-weight: 700; }
    .draft { position: absolute; right: 97px; bottom: 0; display: flex; align-items: center; width: 456px; height: 55px; padding: 0 14px 0 22px; background: #f2f6fc; border-radius: 8px 8px 0 0; box-shadow: 0 0 14px 2px rgba(60, 64, 67, .38); color: #041e49; font-size: 19px; font-weight: 500; }
    .draft span { flex: 1; }
    .draft button { width: 28px; height: 30px; color: #444746; }
    .activate { position: absolute; right: 68px; bottom: 43px; width: 373px; font-family: "Open Sans", sans-serif; color: rgba(128, 130, 134, .55); pointer-events: none; white-space: nowrap; }
    .activate b { display: block; font-weight: 400; font-size: 26px; line-height: 36px; }
    .activate span { display: block; font-size: 19px; line-height: 28px; }
  `];
  render() {
    return html`
      <div class="rail">
        <button class="burger" aria-label="Menú principal">${icon("menu", 30)}</button>
        <div class="apps">
          <a class="app on" href="#mail"><span class="pill">${icon("mail", 26)}</span>Mail</a>
          <a class="app" href="#chat"><span class="pill">${icon("chat", 26)}</span>Chat<span class="badge">1</span></a>
          <a class="app" href="#meet"><span class="pill">${icon("meet", 25)}</span>Meet</a>
        </div>
        <div class="presence">P<i></i></div>
      </div>
      <div class="page">
        <header>
          <div class="logo">${icon("gmail", 42)}<span>Gmail</span></div>
          <div class="search">
            ${icon("search", 32)}
            <input aria-label="Buscar correo" value="is:important">
            <button aria-label="Borrar búsqueda">${icon("close", 32)}</button>
            <button aria-label="Opciones de búsqueda">${icon("tune", 32)}</button>
          </div>
          <button class="status"><i></i>Activo ${icon("chevDown", 18)}</button>
          <div class="hicons">
            <button aria-label="Ayuda">${icon("help", 33)}</button>
            <button aria-label="Configuración">${icon("gear", 32)}</button>
            <button aria-label="Aplicaciones">${icon("apps", 30)}</button>
          </div>
          <button class="account">${icon("shield", 20)}<span>thePower</span><span class="avatar">J</span></button>
        </header>
        <div class="body">
          <div class="side">
            <button class="compose">${icon("pencil", 29)}Redactar</button>
            <nav>
              ${FOLDERS.map((f) => html`
                <a class=${classMap({ on: !!f.active })} href="#carpeta">
                  ${f.nested ? html`<ui-icon class="open" name="arrowRight" size="16"></ui-icon>` : nothing}
                  <span class="slot">${icon(f.icon, f.size ?? 24)}</span>${f.name}
                </a>`)}
            </nav>
            <div class="sbar"></div>
          </div>
          <mail-list></mail-list>
          <div class="addons">
            <button aria-label="Calendar"><span class="cal">31</span></button>
            <button aria-label="Keep">${icon("keep", 26)}</button>
            <button aria-label="Tasks">${icon("tasks", 25)}</button>
            <button aria-label="Contactos">${icon("contacts", 23)}</button>
            <hr>
            <button aria-label="Asana">${icon("asana", 28)}</button>
            <button aria-label="Descargar complementos">${icon("plus", 28)}</button>
            <button class="fold" aria-label="Ocultar panel">${icon("chevRight", 20)}</button>
          </div>
        </div>
      </div>
      <div class="draft">
        <span>Mensaje nuevo</span>
        <button aria-label="Minimizar">${icon("minus", 18)}</button>
        <button aria-label="Pantalla completa">${icon("expand", 19)}</button>
        <button aria-label="Cerrar">${icon("close", 23)}</button>
      </div>
      <div class="activate"><b>Activar Windows</b><span>Ve a Configuración para activar Windows.</span></div>`;
  }
}

@customElement("task-bar")
class TaskBar extends LitElement {
  static styles = [reset, css`
    :host { box-sizing: border-box; display: grid; grid-template-columns: 1fr auto 1fr; align-items: center; height: 62px; padding-top: 3px; border-top: 1px solid #a3b0b5; font-family: "Open Sans", sans-serif; color: #1f2427; background: linear-gradient(90deg, #d2e5f0 0, #cfe1ef 36%, #d6dae7 47%, #d5dae4 56%, #cfdfe9 66%, #d1dee7 100%); }
    .left { display: flex; padding-left: 29px; }
    .mid { display: flex; align-items: center; padding-left: 15px; }
    .find { display: flex; align-items: center; width: 303px; height: 43px; margin: 0 4px 0 20px; padding: 0 14px; border-radius: 22px; background: #f4f6fa; border: 1px solid #c3ccd6; border-bottom: 2px solid #b2bac2; }
    .find input { flex: 1; min-width: 0; border: 0; background: none; padding: 0 14px; font-size: 18px; color: #5a5e62; }
    .find input::placeholder { color: #5a5e62; opacity: 1; }
    .app { position: relative; width: 61px; height: 56px; }
    .app.on::before { content: ""; position: absolute; inset: 2px 5px; border-radius: 6px; background: #e9f1f7; border: 1px solid #dbe5ec; }
    .app ui-icon { position: relative; }
    .app.on::after, .app.run::after { content: ""; position: absolute; bottom: 1px; left: 50%; height: 5px; border-radius: 3px; }
    .app.on::after { width: 22px; margin-left: -11px; background: #0b74d1; }
    .app.run::after { width: 8px; margin-left: -4px; background: #7b848a; }
    .who { position: absolute; right: 7px; top: 5px; width: 22px; height: 22px; border-radius: 50%; background: #00897b; color: #d8efec; font-size: 12px; line-height: 22px; }
    .tray { display: flex; align-items: center; justify-content: flex-end; padding-right: 27px; }
    .tray button { width: 44px; height: 44px; }
    .tray .near { width: 22px; }
    .clock { margin-left: 25px; text-align: right; font-size: 16px; line-height: 22px; }
    .tray .bell { width: 22px; margin-left: 10px; }
  `];
  render() {
    return html`
      <div class="left"><button aria-label="El tiempo">${icon("weather", 31)}</button></div>
      <div class="mid">
        <button aria-label="Inicio">${icon("windows", 32)}</button>
        <label class="find">${icon("magnifier", 21)}<input aria-label="Buscar" placeholder="Buscar"></label>
        <button class="app" aria-label="Vista de tareas">${icon("taskview", 33)}</button>
        <button class="app" aria-label="Explorador">${icon("folder", 34)}</button>
        <button class="app" aria-label="Edge">${icon("edge", 34)}</button>
        <button class="app" aria-label="Store">${icon("store", 32)}</button>
        <button class="app run" aria-label="Veyon">${icon("eye", 35)}</button>
        <button class="app on" aria-label="Chrome">${icon("chrome", 33)}<span class="who">J</span></button>
      </div>
      <div class="tray">
        <button aria-label="Mostrar iconos ocultos">${icon("chevUp", 21)}</button>
        <button aria-label="OneDrive">${icon("cloudOff", 23)}</button>
        <button aria-label="Lápiz">${icon("pen", 24)}</button>
        <button aria-label="Red">${icon("monitor", 23)}</button>
        <button class="near" aria-label="Volumen">${icon("speaker", 24)}</button>
        <div class="clock"><div>10:54</div><div>26/09/2025</div></div>
        <button class="bell" aria-label="Notificaciones">${icon("bell", 22)}</button>
      </div>`;
  }
}

@customElement("app-root")
class AppRoot extends LitElement {
  static styles = css`
    :host { display: grid; grid-template-rows: auto minmax(0, 1fr) auto; height: 100vh; overflow: hidden; }
  `;
  render() {
    return html`<browser-chrome></browser-chrome><gmail-app></gmail-app><task-bar></task-bar>`;
  }
}
